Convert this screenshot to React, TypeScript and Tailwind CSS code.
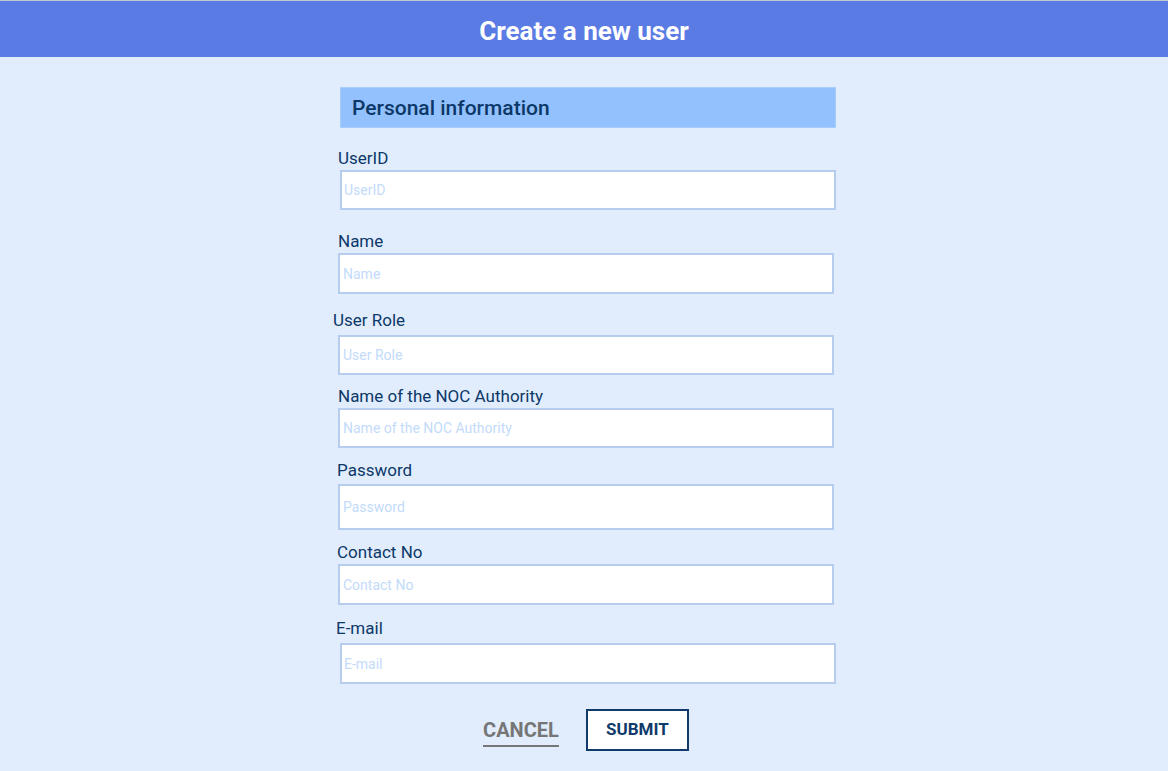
import React from "react";

type Field = {
  label: string;
  labelClass: string;
  inputClass: string;
};

const fields: Field[] = [
  { label: "UserID", labelClass: "mt-[20px] ml-[-2px] mb-[2px]", inputClass: "h-[40px] ml-0 px-[2px]" },
  { label: "Name", labelClass: "mt-[21px] ml-[-2px] mb-[2px]", inputClass: "h-[41px] ml-[-2px] px-[3px]" },
  { label: "User Role", labelClass: "mt-[16px] ml-[-7px] mb-[5px]", inputClass: "h-[40px] ml-[-2px] px-[3px]" },
  { label: "Name of the NOC Authority", labelClass: "mt-[11px] ml-[-2px] mb-[2px]", inputClass: "h-[40px] ml-[-2px] px-[3px]" },
  { label: "Password", labelClass: "mt-[12px] ml-[-3px] mb-[4px]", inputClass: "h-[46px] ml-[-2px] px-[3px]" },
  { label: "Contact No", labelClass: "mt-[12px] ml-[-3px] mb-[2px]", inputClass: "h-[41px] ml-[-2px] px-[3px]" },
  { label: "E-mail", labelClass: "mt-[13px] ml-[-4px] mb-[5px]", inputClass: "h-[41px] ml-0 px-[2px]" },
];

const App = () => {
  return (
    <div className="min-h-screen bg-[#e1edfd] font-['Roboto',sans-serif] border-t border-[#c3c7cf]">
      {/* Header */}
      <header className="h-[56px] bg-[#5b7be4] flex items-center justify-center">
        <h1 className="text-white text-[26px] font-bold leading-none pt-[3px]">Create a new user</h1>
      </header>

      <form className="w-[496px] ml-[340px] pt-[30px] flex flex-col">
        <div className="h-[41px] bg-[#93c1fd] border border-[#a6cdfb] flex items-center px-[11px] pt-[2px]">
          <h2 className="text-[21px] font-medium text-[#0c3868]">Personal information</h2>
        </div>

        {fields.map((f) => (
          <div key={f.label} className="flex flex-col">
            <label className={`text-[17px] leading-[20px] text-[#0c3868] ${f.labelClass}`}>{f.label}</label>
            <input
              placeholder={f.label}
              className={`w-[496px] bg-white border-2 border-[#b6cdef] text-[14px] text-[#0c3868] placeholder:text-[#c3dbfb] outline-none ${f.inputClass}`}
            />
          </div>
        ))}

        <div className="flex items-center justify-center gap-[27px] mt-[25px] pr-[4px]">
          <button
            type="button"
            className="text-[20px] font-bold text-[#767676] border-b-2 border-[#767676] leading-[22px] pb-[4px] mt-[5px]"
          >
            CANCEL
          </button>
          <button
            type="button"
            className="w-[103px] h-[42px] bg-white border-2 border-[#0f3a6a] text-[17px] font-bold text-[#0f3a6a]"
          >
            SUBMIT
          </button>
        </div>
      </form>
    </div>
  );
};

export default App;
